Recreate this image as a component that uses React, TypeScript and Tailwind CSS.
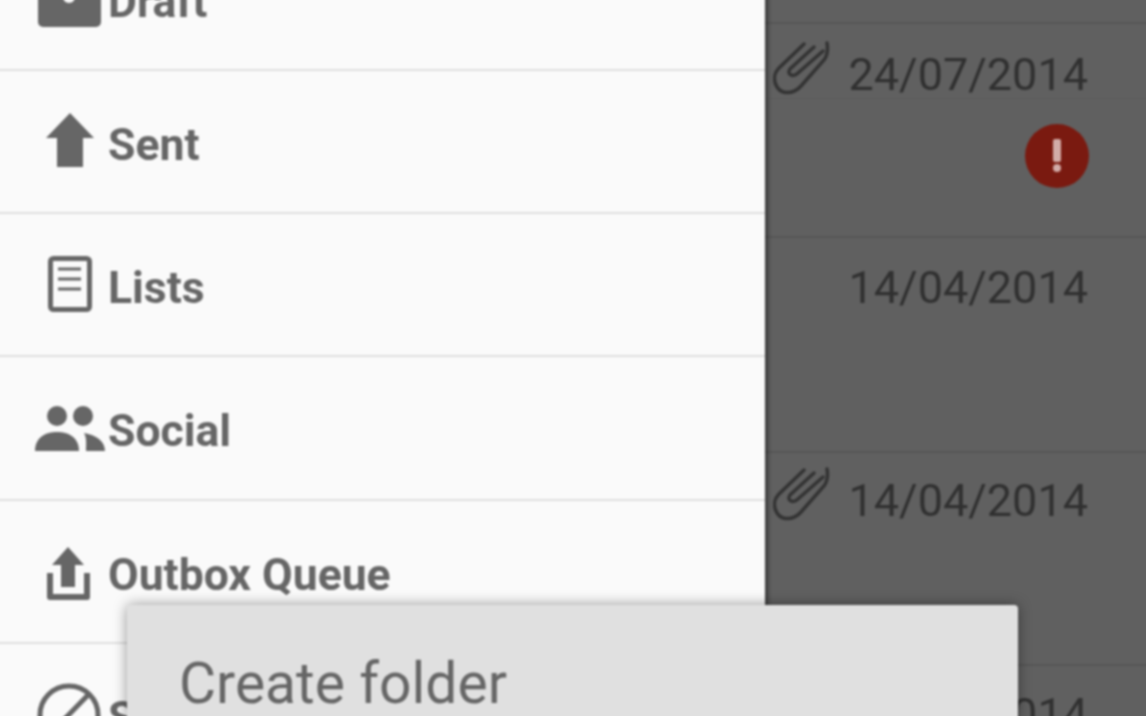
const G = "#666666";

function Clip() {
  return (
    <svg width="58" height="56" viewBox="0 0 58 56" fill="none" stroke="#333333" strokeWidth="3.5" strokeLinecap="round" className="-translate-y-[7px]">
      <path d="M54 3C55 9 54 16 51 20L28 46C21 54 9 55 4 47C0 40 1 33 6 28L31 4" />
      <path d="M41 7L17 29C13 34 20 38 25 33L50 11" />
    </svg>
  );
}

function DateRow({ date, clip, line, pad }: { date: string; clip?: boolean; line?: boolean; pad: string }) {
  return (
    <div className={`flex h-[75px] items-center justify-end gap-[18px] pr-[62px] ${pad} ${line ? "border-b border-[#5b5b5b]" : ""}`}>
      {clip && <Clip />}
      <span className="text-[45px] leading-[48px] text-[#303030]">{date}</span>
    </div>
  );
}

function Icon({ children }: { children: React.ReactNode }) {
  return (
    <svg width="72" height="143" viewBox="0 0 72 143" className="shrink-0 overflow-visible">
      {children}
    </svg>
  );
}

const rows: { label: string; h: string; icon: React.ReactNode }[] = [
  {
    label: "Draft",
    h: "h-[143px]",
    icon: (
      <>
        <rect x="4" y="40" width="63" height="60" rx="5" fill={G} />
        <circle cx="35" cy="70" r="6" fill="#fafafa" />
      </>
    ),
  },
  {
    label: "Sent",
    h: "h-[143px]",
    icon: <path d="M36 43L60 68H49V97H23V68H12Z" fill={G} />,
  },
  {
    label: "Lists",
    h: "h-[143px]",
    icon: (
      <>
        <rect x="16.5" y="45.5" width="39" height="51" rx="3" fill="none" stroke={G} strokeWidth="5" />
        <path d="M24 56H47M24 66H47M24 76H47" stroke={G} strokeWidth="3" />
      </>
    ),
  },
  {
    label: "Social",
    h: "h-[144px]",
    icon: (
      <>
        <circle cx="23" cy="59" r="10" fill={G} />
        <circle cx="49" cy="59" r="10" fill={G} />
        <path d="M1 94C1 80 12 75 23 75C34 75 45 80 45 94Z" fill={G} />
        <path d="M52 94H71C71 84 62 78 50 76C53 81 52 88 52 94Z" fill={G} />
      </>
    ),
  },
  {
    label: "Outbox Queue",
    h: "h-[143px]",
    icon: (
      <>
        <path d="M34 47L50 65H41V87H27V65H18Z" fill={G} />
        <path d="M16 73V97H53V73" fill="none" stroke={G} strokeWidth="6" strokeLinejoin="round" />
      </>
    ),
  },
  {
    label: "Spam",
    h: "h-[143px]",
    icon: (
      <>
        <circle cx="35" cy="72" r="29" fill="none" stroke={G} strokeWidth="5" />
        <path d="M55 51L15 92" stroke={G} strokeWidth="5" />
      </>
    ),
  },
];

export default function App() {
  return (
    <div className="h-[716px] w-[1146px] overflow-hidden">
      <div className="relative -ml-[4px] -mt-[4px] flex h-[724px] w-[1154px] overflow-hidden bg-[#606060] font-[family-name:Roboto] blur-[0.8px]">
        <div className="relative z-10 -mt-[68px] w-[769px] shrink-0 bg-[#fafafa] shadow-[3px_0_4px_rgba(0,0,0,0.4)]">
          {rows.map((r) => (
            <div key={r.label} className={`flex ${r.h} items-center gap-[2px] border-b-2 border-[#dfdfdf] pl-[38px]`}>
              <Icon>{r.icon}</Icon>
              <span className="mt-[6px] text-[44.5px] leading-[50px] font-bold text-[#666666]">{r.label}</span>
            </div>
          ))}
        </div>

        <div className="flex-1">
          <div className="h-[28px] border-b-2 border-[#565656]" />
          <div className="h-[214px] border-b-2 border-[#565656]">
            <DateRow date="24/07/2014" clip line pad="pt-[28px]" />
            <div className="mt-[25px] flex justify-end pr-[61px]">
              <svg width="64" height="64" viewBox="0 0 64 64">
                <circle cx="32" cy="32" r="32" fill="#7a1a10" />
                <rect x="28" y="15" width="8" height="23" rx="2" fill="#d2aca8" />
                <circle cx="32" cy="44" r="4" fill="#d2aca8" />
              </svg>
            </div>
          </div>
          <div className="h-[215px] border-b-2 border-[#565656]">
            <DateRow date="14/04/2014" pad="pt-[24px]" />
          </div>
          <div className="h-[213px] border-b-2 border-[#565656]">
            <DateRow date="14/04/2014" clip pad="pt-[20px]" />
          </div>
          <DateRow date="24/01/2014" pad="pt-[22px]" />
        </div>

        <div className="absolute bottom-0 left-[131px] top-[609px] z-20 w-[891px] rounded-t-sm bg-[#e0e0e0] pl-[52px] pt-[44px] shadow-[0_0_14px_rgba(0,0,0,0.4)]">
          <span className="block text-[57px] leading-[70px] text-[#666666]">Create folder</span>
        </div>
      </div>
    </div>
  );
}
